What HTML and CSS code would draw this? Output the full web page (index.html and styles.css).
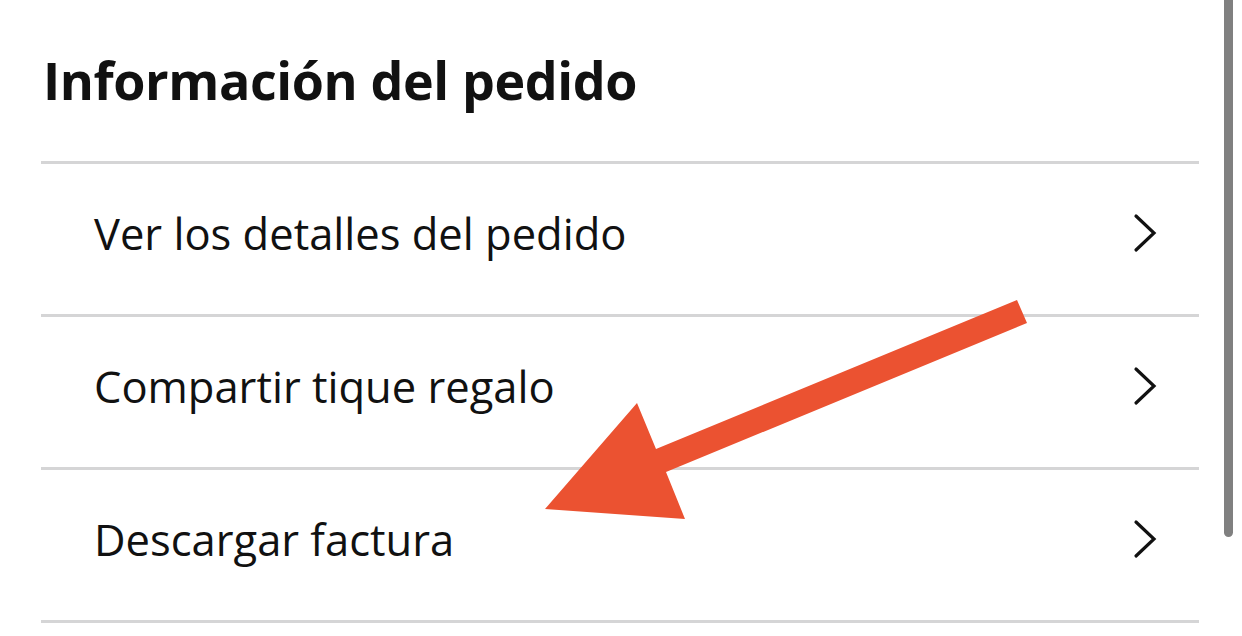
FILE: index.html
```html
<!DOCTYPE html>
<html lang="es">
<head>
<meta charset="utf-8">
<title>Información del pedido</title>
<link rel="stylesheet" href="styles.css">
</head>
<body>
<main class="page">
  <h1 class="title">Información del pedido</h1>
  <ul class="list">
    <li class="row"><span class="label">Ver los detalles del pedido</span><svg class="chev" viewBox="0 0 24 40" width="24" height="40"><path d="M3 3 L21 20 L3 37" fill="none" stroke="#111" stroke-width="3.2" stroke-linecap="round" stroke-linejoin="miter"/></svg></li>
    <li class="row"><span class="label">Compartir tique regalo</span><svg class="chev" viewBox="0 0 24 40" width="24" height="40"><path d="M3 3 L21 20 L3 37" fill="none" stroke="#111" stroke-width="3.2" stroke-linecap="round" stroke-linejoin="miter"/></svg></li>
    <li class="row"><span class="label">Descargar factura</span><svg class="chev" viewBox="0 0 24 40" width="24" height="40"><path d="M3 3 L21 20 L3 37" fill="none" stroke="#111" stroke-width="3.2" stroke-linecap="round" stroke-linejoin="miter"/></svg></li>
  </ul>
</main>
<div class="scrollbar"></div>
<svg class="arrow" viewBox="0 0 1242 636" width="1242" height="636">
  <polygon points="1017,300 1027,323 666,472 685,519 545,509 637,403 656,449" fill="#eb5231"/>
</svg>
</body>
</html>
```
FILE: styles.css
```css
html, body {
  margin: 0;
  padding: 0;
  background: #ffffff;
}
body {
  width: 1242px;
  height: 636px;
  overflow: hidden;
  position: relative;
  font-family: "Open Sans", "Noto Sans", "Liberation Sans", sans-serif;
  color: #111111;
}
.page {
  padding: 0 43px 0 41px;
}
.title {
  margin: 0;
  height: 161px;
  box-sizing: border-box;
  padding: 48px 0 0 2px;
  font-size: 52px;
  font-weight: 700;
  line-height: 64px;
  letter-spacing: -0.4px;
}
.list {
  list-style: none;
  margin: 0;
  padding: 0;
  border-top: 3px solid #d5d5d6;
}
.row {
  height: 150px;
  border-bottom: 3px solid #d5d5d6;
  display: flex;
  align-items: center;
  justify-content: space-between;
  padding: 0 42px 0 53px;
  box-sizing: content-box;
}
.label {
  font-size: 43.5px;
  font-weight: 400;
  line-height: 50px;
  margin-top: -11px;
}
.chev {
  display: block;
  margin-top: -12px;
}
.scrollbar {
  position: absolute;
  left: 1224px;
  top: -10px;
  width: 9px;
  height: 547px;
  border-radius: 5px;
  background: #808080;
}
.arrow {
  position: absolute;
  left: 0;
  top: 0;
}
```
